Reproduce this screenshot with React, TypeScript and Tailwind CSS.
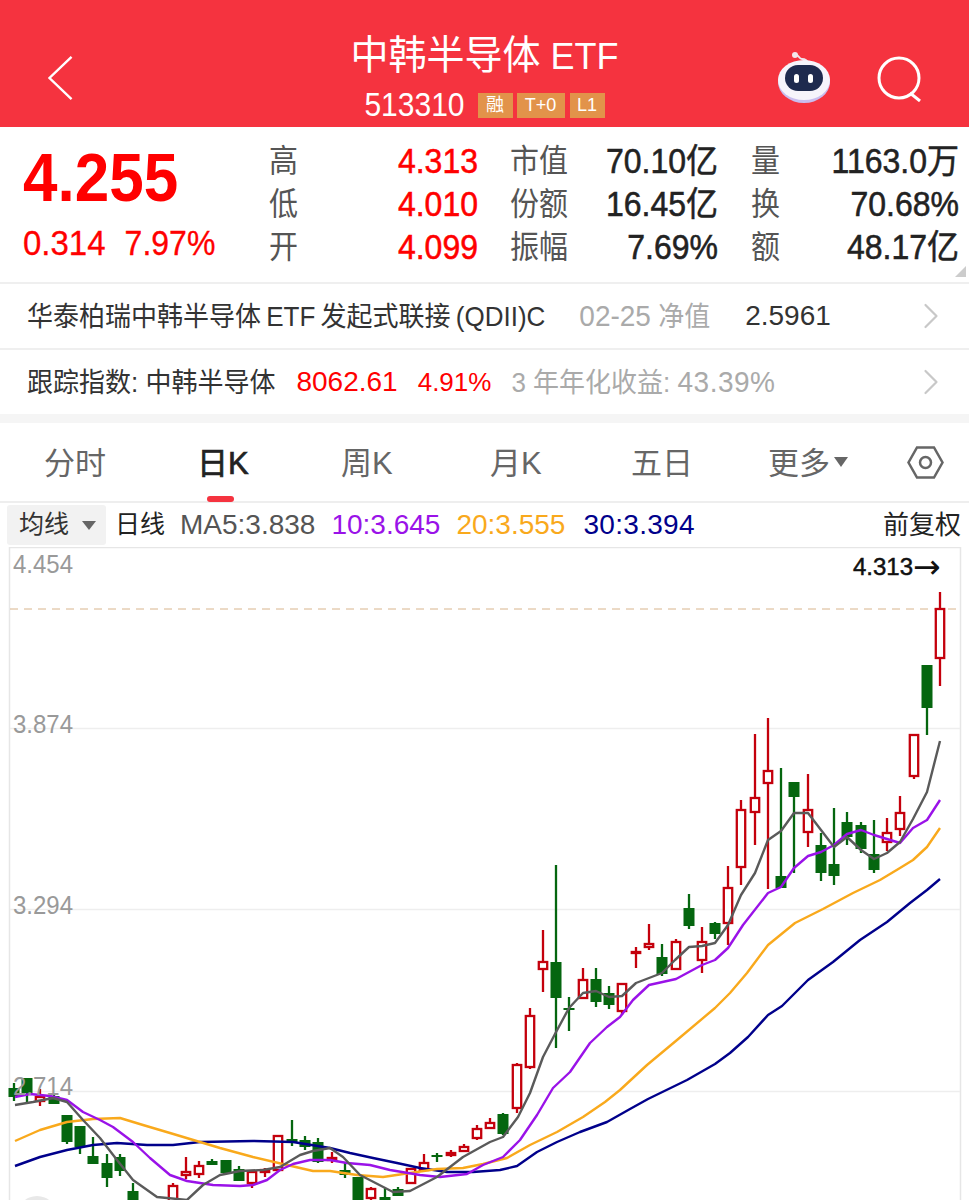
import React from 'react';
import { ChevronRight } from 'lucide-react';

type Candle = [number, number, number, number, number, 'r' | 'g'];

// x, high, body top, body bottom, low, colour
const candles: Candle[] = [
  [14, 1083, 1088, 1097, 1101, 'g'], [27, 1078, 1078, 1093, 1102, 'g'], [40, 1089, 1097, 1101, 1106, 'r'],
  [54, 1095, 1096, 1104, 1104, 'g'], [67, 1115, 1115, 1142, 1144, 'g'], [80, 1126, 1126, 1147, 1154, 'g'],
  [93, 1137, 1156, 1164, 1164, 'g'], [107, 1154, 1163, 1178, 1187, 'g'], [120, 1154, 1157, 1171, 1176, 'g'],
  [133, 1183, 1191, 1210, 1210, 'g'], [173, 1183, 1186, 1210, 1210, 'r'], [186, 1157, 1172, 1175, 1179, 'r'],
  [199, 1161, 1166, 1174, 1178, 'r'], [212, 1159, 1161, 1165, 1165, 'g'], [226, 1160, 1160, 1173, 1173, 'g'],
  [239, 1166, 1169, 1181, 1181, 'g'], [252, 1172, 1172, 1183, 1188, 'r'], [265, 1168, 1170, 1172, 1177, 'r'],
  [278, 1135, 1136, 1170, 1170, 'r'], [292, 1120, 1139, 1143, 1146, 'g'], [305, 1136, 1140, 1147, 1150, 'g'],
  [318, 1138, 1142, 1162, 1163, 'g'], [332, 1152, 1158, 1160, 1163, 'r'], [345, 1163, 1170, 1175, 1178, 'g'],
  [358, 1177, 1177, 1210, 1210, 'g'], [371, 1187, 1189, 1198, 1200, 'r'], [385, 1188, 1197, 1210, 1210, 'g'],
  [398, 1187, 1189, 1196, 1196, 'g'], [411, 1168, 1169, 1183, 1183, 'r'], [424, 1154, 1163, 1170, 1172, 'r'],
  [437, 1153, 1155, 1157, 1162, 'g'], [451, 1150, 1153, 1155, 1157, 'r'], [464, 1144, 1147, 1151, 1151, 'r'],
  [477, 1125, 1129, 1138, 1140, 'r'], [490, 1118, 1123, 1128, 1128, 'r'], [503, 1113, 1114, 1134, 1135, 'g'],
  [517, 1063, 1065, 1108, 1113, 'r'], [530, 1008, 1016, 1067, 1069, 'r'], [543, 930, 962, 969, 992, 'r'],
  [556, 865, 962, 998, 1048, 'g'], [569, 997, 1008, 1009, 1031, 'g'], [583, 968, 980, 998, 999, 'r'],
  [596, 968, 979, 1002, 1007, 'g'], [609, 986, 993, 1005, 1009, 'g'], [622, 983, 984, 1011, 1015, 'r'],
  [636, 947, 952, 953, 968, 'r'], [649, 924, 944, 947, 950, 'r'], [662, 944, 957, 974, 976, 'g'],
  [676, 939, 942, 969, 969, 'r'], [689, 894, 908, 926, 929, 'g'], [702, 927, 942, 960, 973, 'r'],
  [715, 922, 923, 934, 939, 'g'], [728, 866, 888, 923, 945, 'r'], [741, 800, 810, 867, 885, 'r'],
  [755, 734, 798, 812, 845, 'r'], [768, 718, 771, 783, 889, 'r'], [781, 768, 876, 888, 888, 'g'],
  [794, 782, 782, 797, 873, 'g'], [808, 774, 810, 832, 847, 'r'], [821, 833, 845, 873, 881, 'g'],
  [834, 808, 864, 876, 885, 'g'], [847, 812, 822, 837, 845, 'g'], [861, 822, 825, 849, 853, 'g'],
  [874, 820, 854, 870, 873, 'g'], [887, 818, 833, 842, 851, 'r'], [900, 796, 813, 829, 836, 'r'],
  [914, 734, 735, 776, 779, 'r'], [927, 665, 665, 708, 735, 'g'], [940, 592, 609, 658, 686, 'r'],
];

const ma5 = '15,1105 33,1102 53,1098 67,1102 83,1120 100,1138 117,1160 133,1180 157,1197 187,1200 203,1185 220,1175 240,1171 263,1170 280,1167 300,1155 313,1151 330,1148 343,1157 360,1175 393,1192 410,1191 437,1177 463,1157 490,1142 503,1137 518,1117 530,1093 543,1057 555,1034 569,1008 583,993 596,991 609,997 622,996 636,983 649,978 662,973 675,960 689,947 702,946 715,943 728,925 741,895 755,873 768,840 781,831 794,813 808,813 821,830 834,847 847,837 861,850 874,859 887,853 900,842 913,819 927,792 940,741';
const ma10 = '15,1097 30,1094 50,1096 67,1100 83,1112 100,1120 113,1127 133,1142 150,1158 170,1175 187,1181 213,1185 240,1186 253,1185 267,1180 280,1170 293,1164 310,1160 330,1160 347,1163 370,1165 390,1170 420,1175 440,1177 467,1174 483,1165 503,1157 520,1140 537,1115 553,1088 570,1072 590,1043 607,1027 620,1017 633,1000 649,985 676,979 702,965 715,960 728,948 743,925 768,893 781,887 794,868 808,856 821,852 834,845 847,834 861,830 874,835 887,839 900,843 913,828 927,820 940,800';
const ma20 = '15,1141 40,1130 67,1122 93,1119 120,1118 143,1125 170,1133 200,1142 220,1148 253,1157 287,1165 313,1171 330,1171 357,1175 383,1177 410,1173 437,1169 463,1168 483,1164 507,1158 530,1145 557,1132 583,1117 605,1102 620,1090 647,1065 677,1040 715,1008 730,993 747,973 768,945 795,923 823,909 853,893 880,880 900,868 913,860 927,847 940,828';
const ma30 = '15,1166 40,1157 67,1150 93,1145 117,1143 147,1145 173,1145 200,1142 253,1141 293,1142 330,1148 350,1153 373,1158 397,1163 420,1168 447,1172 473,1172 500,1170 517,1166 537,1152 557,1142 580,1132 607,1122 630,1109 648,1099 687,1080 715,1064 730,1053 748,1037 768,1015 782,1006 808,980 833,962 860,940 887,922 910,903 927,890 940,879';

function KChart() {
  return (
    <svg viewBox="0 547 969 653" className="absolute inset-0 h-full w-full">
      <path d="M9.5 1200V547.5H960.5V1200" fill="none" stroke="#e6e6e6" strokeWidth="1.5" />
      <path d="M10 728.5H960M10 909.5H960M10 1091.5H960" stroke="#eeeeee" strokeWidth="1.5" />
      <path d="M10 609H960" stroke="#d8b48c" strokeWidth="1" strokeDasharray="8 6" />
      <circle cx="37" cy="1216" r="20" fill="#e8e8e8" />
      {candles.map(([x, high, top, bottom, low, c]) => {
        const color = c === 'r' ? '#c4000c' : '#05660f';
        return (
          <g key={x}>
            <path d={`M${x} ${high}V${low}`} stroke={color} strokeWidth="2.3" />
            {c === 'r' ? (
              <rect x={x - 4.2} y={top} width="8.4" height={Math.max(bottom - top, 1)} fill="#fff" stroke={color} strokeWidth="2.3" />
            ) : (
              <rect x={x - 5.5} y={top} width="11" height={Math.max(bottom - top, 2)} fill={color} />
            )}
          </g>
        );
      })}
      <g fill="none" strokeWidth="2.4" strokeLinejoin="round">
        <polyline points={ma30} stroke="#00008b" />
        <polyline points={ma20} stroke="#f9a91c" />
        <polyline points={ma10} stroke="#9a12e8" />
        <polyline points={ma5} stroke="#5a5a5a" />
      </g>
    </svg>
  );
}

function Robot() {
  return (
    <svg viewBox="0 0 54 54" className="h-[54px] w-[54px]">
      <path d="M19 5c3 0 3 4 6 4 3 0 5 1 6 4" fill="none" stroke="#efe6ee" strokeWidth="2" />
      <circle cx="18" cy="5" r="3" fill="#f3e6ea" />
      <ellipse cx="27" cy="32" rx="26" ry="21" fill="#c9bdee" />
      <ellipse cx="27" cy="30" rx="26" ry="20" fill="#f6f4fb" />
      <rect x="8" y="15" width="38" height="26" rx="13" fill="#1e2a4e" />
      <rect x="17" y="24" width="5" height="9" rx="2.5" fill="#fff" />
      <rect x="31" y="24" width="5" height="9" rx="2.5" fill="#fff" />
    </svg>
  );
}

const rows = [
  ['高', '4.313', '市值', '70.10亿', '量', '1163.0万'],
  ['低', '4.010', '份额', '16.45亿', '换', '70.68%'],
  ['开', '4.099', '振幅', '7.69%', '额', '48.17亿'],
];

const tabs = [
  { label: '分时', cls: 'absolute left-[44px] top-[18px]' },
  { label: '日K', cls: 'absolute left-[197px] top-[18px] text-[#222] [-webkit-text-stroke:0.7px_#222]' },
  { label: '周K', cls: 'absolute left-[341px] top-[18px]' },
  { label: '月K', cls: 'absolute left-[490px] top-[18px]' },
  { label: '五日', cls: 'absolute left-[631px] top-[18px]' },
  { label: '更多', cls: 'absolute left-[768px] top-[18px]' },
];

export default function App() {
  return (
    <div className="h-[1200px] w-[969px] overflow-hidden bg-white font-['Liberation_Sans','Noto_Sans_CJK_SC',sans-serif]">
      <header className="relative h-[127px] bg-[#f5333f] text-white">
        <div className="flex flex-col items-center pt-[32px]">
          <div className="flex items-baseline scale-y-[1.04] text-[38px] leading-[46px]">
            中韩半导体<span className="ml-[10px] text-[36px]">ETF</span>
          </div>
          <div className="mt-[9px] flex items-center">
            <span className="mr-[13px] scale-y-[1.1] text-[30px] leading-[34px]">513310</span>
            <span className="flex h-[25px] w-[35px] items-center justify-center bg-[#e2934a] text-[18px]">融</span>
            <span className="ml-[4px] flex h-[25px] w-[48px] items-center justify-center bg-[#e2934a] text-[18px]">T+0</span>
            <span className="ml-[5px] flex h-[25px] w-[35px] items-center justify-center bg-[#e2934a] text-[18px]">L1</span>
          </div>
        </div>
        <svg viewBox="0 0 30 48" className="absolute left-[46px] top-[55px] h-[46px] w-[30px]" fill="none" stroke="#fff" strokeWidth="2.5">
          <path d="M26 2 3 24l23 22" />
        </svg>
        <div className="absolute left-[777px] top-[50px]"><Robot /></div>
        <svg viewBox="0 0 48 48" className="absolute left-[875px] top-[54px] h-[48px] w-[48px]" fill="none" stroke="#fff" strokeWidth="3">
          <circle cx="24" cy="24" r="20" />
          <path d="m35 39 10 8" />
        </svg>
      </header>

      <section className="relative flex h-[155px] pt-[13px]">
        <div className="w-[269px] pl-[23px] text-[#f00]">
          <div className="scale-y-[1.1] origin-center text-[62px] font-bold leading-[76px]">4.255</div>
          <div className="mt-[5px] flex scale-y-[1.08] text-[33px] leading-[44px] [-webkit-text-stroke:0.3px_#f00]">
            <span>0.314</span>
            <span className="ml-[19px] text-[32px]">7.97%</span>
          </div>
        </div>
        <div className="flex-1 pr-[10px]">
          {rows.map((r) => (
            <div key={r[0]} className="flex h-[43px] scale-y-[1.08] items-center text-[32px]">
              <span className="w-[60px] text-[29px] text-[#555]">{r[0]}</span>
              <span className="w-[149px] -translate-y-[1px] text-right text-[#f00] [-webkit-text-stroke:0.5px_#f00]">{r[1]}</span>
              <span className="ml-[32px] w-[70px] text-[29px] text-[#555]">{r[2]}</span>
              <span className="w-[138px] -translate-y-[1px] text-right text-[#222] [-webkit-text-stroke:0.5px_#222]">{r[3]}</span>
              <span className="ml-[33px] w-[40px] text-[29px] text-[#555]">{r[4]}</span>
              <span className="flex-1 -translate-y-[1px] text-right text-[#222] [-webkit-text-stroke:0.5px_#222]">{r[5]}</span>
            </div>
          ))}
        </div>
        <span className="absolute right-[3px] top-[139px] h-0 w-0 border-b-[11px] border-l-[11px] border-b-[#ccc] border-l-transparent" />
      </section>

      <div className="flex h-[66px] items-center border-t-2 border-[#efefef] pl-[27px] pr-[16px] text-[26px]">
        <span className="scale-y-[1.06] text-[#333] [word-spacing:-2px]">华泰柏瑞中韩半导体 ETF 发起式联接 (QDII)C</span>
        <span className="ml-[34px] scale-y-[1.06] text-[#aaa]"><span className="text-[28px]">02-25</span> 净值</span>
        <span className="ml-[35px] text-[28px] text-[#333]">2.5961</span>
        <ChevronRight className="ml-auto h-[44px] w-[44px] text-[#c8c8c8]" strokeWidth={1.2} />
      </div>
      <div className="flex h-[66px] items-center border-t-2 border-[#efefef] pl-[27px] pr-[16px] text-[26px]">
        <span className="scale-y-[1.06] text-[#333]">跟踪指数: 中韩半导体</span>
        <span className="ml-[21px] text-[28px] text-[#f00]">8062.61</span>
        <span className="ml-[20px] text-[26px] text-[#f00]">4.91%</span>
        <span className="ml-[20px] scale-y-[1.06] text-[#aaa]">
          3 年年化收益: <span className="text-[28px] tracking-[0.5px]">43.39%</span>
        </span>
        <ChevronRight className="ml-auto h-[44px] w-[44px] text-[#c8c8c8]" strokeWidth={1.2} />
      </div>
      <div className="h-[9px] bg-[#f5f5f5]" />

      <nav className="relative h-[80px] border-b-2 border-[#eee] text-[31px] text-[#666]">
        {tabs.map((t) => (
          <span key={t.label} className={t.cls}>{t.label}</span>
        ))}
        <span className="absolute left-[834px] top-[34px] h-0 w-0 border-x-[7px] border-t-[10px] border-x-transparent border-t-[#666]" />
        <span className="absolute -bottom-[1px] left-[207px] h-[6px] w-[27px] rounded-full bg-[#f5333f]" />
        <svg viewBox="0 0 37 33" className="absolute left-[907px] top-[23px] h-[33px] w-[37px]" fill="none" stroke="#666" strokeWidth="2.5">
          <path d="M10 1.5h17l8.500 15-8.500 15H10L1.500 16.500z" />
          <circle cx="18.500" cy="16.500" r="5.500" />
        </svg>
      </nav>

      <div className="flex h-[44px] items-center text-[25px]">
        <span className="ml-[7px] flex h-[40px] w-[99px] items-center rounded-[3px] bg-[#f2f2f2] pl-[12px] text-[#333]">
          均线
          <span className="ml-[13px] h-0 w-0 border-x-[7px] border-t-[9px] border-x-transparent border-t-[#666]" />
        </span>
        <span className="ml-[9px] text-[#222]">日线</span>
        <span className="ml-[15px] text-[28px] text-[#555]">MA5:3.838</span>
        <span className="ml-[16px] text-[28px] text-[#9a12e8]">10:3.645</span>
        <span className="ml-[16px] text-[28px] text-[#f9a91c]">20:3.555</span>
        <span className="ml-[18px] text-[28px] tracking-[0.3px] text-[#00008b]">30:3.394</span>
        <span className="ml-auto mr-[8px] text-[26px] text-[#222]">前复权</span>
      </div>

      <div className="relative h-[653px]">
        <KChart />
        <span className="absolute left-[13px] top-[-1px] scale-y-[1.1] text-[24px] text-[#999]">4.454</span>
        <span className="absolute left-[13px] top-[159px] scale-y-[1.1] text-[24px] text-[#999]">3.874</span>
        <span className="absolute left-[13px] top-[340px] scale-y-[1.1] text-[24px] text-[#999]">3.294</span>
        <span className="absolute left-[13px] top-[521px] scale-y-[1.1] text-[24px] text-[#999]">2.714</span>
        <span className="absolute left-[853px] top-[2px] flex items-center text-[24px] text-[#111] [-webkit-text-stroke:0.5px_#111]">
          4.313<span className="font-['DejaVu_Sans'] text-[33px] leading-[28px] [-webkit-text-stroke:0]">→</span>
        </span>
      </div>
    </div>
  );
}
